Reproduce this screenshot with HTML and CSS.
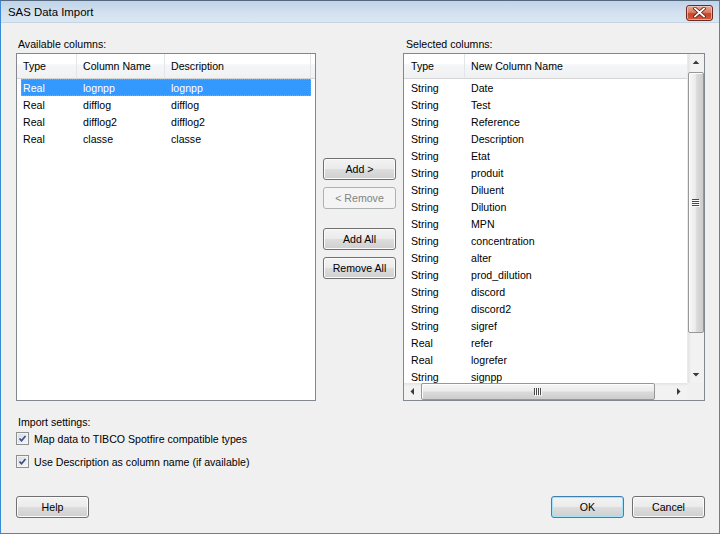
FILE: index.html
```html
<!DOCTYPE html>
<html>
<head>
<meta charset="utf-8">
<title>SAS Data Import</title>
<link rel="stylesheet" href="styles.css">
</head>
<body>
<div class="window">
  <div class="titlebar">
    <span class="title">SAS Data Import</span>
    <div class="close">
      <svg width="13" height="11" viewBox="0 0 13 11"><path d="M2 1.5 L11 9.5 M11 1.5 L2 9.5" stroke="#5a1a12" stroke-width="3.4" stroke-linecap="square" fill="none"/><path d="M2 1.5 L11 9.5 M11 1.5 L2 9.5" stroke="#ffffff" stroke-width="1.8" stroke-linecap="square" fill="none"/></svg>
    </div>
  </div>
  <div class="client">
    <div class="main">
      <div class="col">
        <div class="label">Available columns:</div>
        <div class="listbox">
          <div class="lv-header">
            <div class="hc hc-type">Type</div>
            <div class="hc hc-name">Column Name</div>
            <div class="hc hc-desc">Description</div>
          </div>
          <div class="lrow selected"><span class="c1">Real</span><span class="c2">lognpp</span><span class="c3">lognpp</span></div>
          <div class="lrow"><span class="c1">Real</span><span class="c2">difflog</span><span class="c3">difflog</span></div>
          <div class="lrow"><span class="c1">Real</span><span class="c2">difflog2</span><span class="c3">difflog2</span></div>
          <div class="lrow"><span class="c1">Real</span><span class="c2">classe</span><span class="c3">classe</span></div>
        </div>
      </div>
      <div class="mid">
        <div class="btn">Add &gt;</div>
        <div class="btn disabled gap-s">&lt; Remove</div>
        <div class="btn gap-l">Add All</div>
        <div class="btn gap-s">Remove All</div>
      </div>
      <div class="col">
        <div class="label label-r">Selected columns:</div>
        <div class="listbox grid-lb">
          <div class="rlist">
            <div class="lv-header">
              <div class="hc rh-type">Type</div>
              <div class="hc rh-name">New Column Name</div>
            </div>
            <div class="rrow"><span class="r1">String</span><span class="r2">Date</span></div>
            <div class="rrow"><span class="r1">String</span><span class="r2">Test</span></div>
            <div class="rrow"><span class="r1">String</span><span class="r2">Reference</span></div>
            <div class="rrow"><span class="r1">String</span><span class="r2">Description</span></div>
            <div class="rrow"><span class="r1">String</span><span class="r2">Etat</span></div>
            <div class="rrow"><span class="r1">String</span><span class="r2">produit</span></div>
            <div class="rrow"><span class="r1">String</span><span class="r2">Diluent</span></div>
            <div class="rrow"><span class="r1">String</span><span class="r2">Dilution</span></div>
            <div class="rrow"><span class="r1">String</span><span class="r2">MPN</span></div>
            <div class="rrow"><span class="r1">String</span><span class="r2">concentration</span></div>
            <div class="rrow"><span class="r1">String</span><span class="r2">alter</span></div>
            <div class="rrow"><span class="r1">String</span><span class="r2">prod_dilution</span></div>
            <div class="rrow"><span class="r1">String</span><span class="r2">discord</span></div>
            <div class="rrow"><span class="r1">String</span><span class="r2">discord2</span></div>
            <div class="rrow"><span class="r1">String</span><span class="r2">sigref</span></div>
            <div class="rrow"><span class="r1">Real</span><span class="r2">refer</span></div>
            <div class="rrow"><span class="r1">Real</span><span class="r2">logrefer</span></div>
            <div class="rrow"><span class="r1">String</span><span class="r2">signpp</span></div>
          </div>
          <div class="vscroll">
            <div class="arrow"><svg width="17" height="17" viewBox="0 0 17 17"><path d="M5 10 L8.5 6.5 L12 10 Z" fill="#3a3a3a"/></svg></div>
            <div class="vthumb">
              <svg width="8" height="8" viewBox="0 0 8 8"><path d="M0 0.5h7M0 2.5h7M0 4.5h7M0 6.5h7" stroke="#4a4a4a" stroke-width="1"/><path d="M1 1.5h7M1 3.5h7M1 5.5h7M1 7.5h7" stroke="#fbfbfb" stroke-width="1"/></svg>
            </div>
            <div class="track"></div>
            <div class="arrow"><svg width="17" height="17" viewBox="0 0 17 17"><path d="M5 7 L8.5 10.5 L12 7 Z" fill="#3a3a3a"/></svg></div>
          </div>
          <div class="hscroll">
            <div class="arrow"><svg width="17" height="17" viewBox="0 0 17 17"><path d="M10 5 L6.5 8.5 L10 12 Z" fill="#3a3a3a"/></svg></div>
            <div class="hthumb">
              <svg width="8" height="8" viewBox="0 0 8 8"><path d="M0.5 0v7M2.5 0v7M4.5 0v7M6.5 0v7" stroke="#4a4a4a" stroke-width="1"/><path d="M1.5 1v7M3.5 1v7M5.5 1v7M7.5 1v7" stroke="#fbfbfb" stroke-width="1"/></svg>
            </div>
            <div class="track"></div>
            <div class="arrow"><svg width="17" height="17" viewBox="0 0 17 17"><path d="M7 5 L10.5 8.5 L7 12 Z" fill="#3a3a3a"/></svg></div>
          </div>
          <div class="corner"></div>
        </div>
      </div>
    </div>

    <div class="settings">
      <div class="label">Import settings:</div>
      <div class="cbrow">
        <span class="cb"><svg width="13" height="13" viewBox="0 0 13 13"><path d="M3.5 6.5 L5.5 8.8 L9.5 4" stroke="#3b4f86" stroke-width="1.7" fill="none"/></svg></span>
        <span>Map data to TIBCO Spotfire compatible types</span>
      </div>
      <div class="cbrow cbrow2">
        <span class="cb"><svg width="13" height="13" viewBox="0 0 13 13"><path d="M3.5 6.5 L5.5 8.8 L9.5 4" stroke="#3b4f86" stroke-width="1.7" fill="none"/></svg></span>
        <span>Use Description as column name (if available)</span>
      </div>
    </div>

    <div class="footer">
      <div class="btn">Help</div>
      <div class="spacer"></div>
      <div class="btn default">OK</div>
      <div class="btn">Cancel</div>
    </div>
  </div>
</div>
</body>
</html>
```

FILE: styles.css
```css
* { box-sizing: border-box; }
html, body { margin: 0; padding: 0; }
body {
  width: 720px;
  height: 534px;
  overflow: hidden;
  background: #ffffff;
  font-family: "Liberation Sans", Arial, sans-serif;
  font-size: 10.6px;
  color: #000;
}
.window {
  width: 720px;
  height: 534px;
  display: flex;
  flex-direction: column;
  border: 1px solid #3a8ad6;
  border-top-color: #56687c;
  background: #f0f0f0;
}
.titlebar {
  height: 22px;
  flex: none;
  display: flex;
  align-items: center;
  justify-content: space-between;
  padding: 0 6px 0 7px;
  background: linear-gradient(#c0d3e8, #d3e1f0 55%, #dae6f3);
  border-bottom: 1px solid #c5d3e2;
}
.title {
  font-size: 11.4px;
  color: #000;
  padding-top: 1px;
}
.close {
  width: 27px;
  height: 16px;
  margin-top: 2px;
  border: 1px solid #6f2a1f;
  border-radius: 3px;
  display: flex;
  align-items: center;
  justify-content: center;
  background: linear-gradient(#e8a795 0%, #db7d66 45%, #c7452c 55%, #cf5c3f 100%);
  box-shadow: inset 0 0 0 1px rgba(255, 220, 205, 0.6);
}
.client {
  flex: 1;
  display: flex;
  flex-direction: column;
  padding: 14px 14px 0 15px;
}
.main {
  display: grid;
  grid-template-columns: 300px 73px 302px;
  column-gap: 7px;
}
.label {
  height: 16px;
  line-height: 14px;
  padding-left: 2px;
}
.label-r { padding-left: 3px; }
.listbox {
  height: 348px;
  border: 1px solid #828790;
  background: #fff;
  overflow: hidden;
}
.lv-header {
  display: flex;
  height: 25px;
  border-bottom: 1px solid #d5d5d5;
  background: linear-gradient(#ffffff 0%, #ffffff 40%, #f5f6f7 45%, #f0f1f2 100%);
  white-space: nowrap;
}
.hc {
  flex: none;
  line-height: 25px;
  padding-left: 6px;
  border-right: 1px solid #e2e5ea;
}
.hc-type { width: 60px; }
.hc-name { width: 88px; }
.hc-desc { width: 146px; }
.lrow {
  display: flex;
  height: 17px;
  line-height: 18px;
  margin-left: 4px;
  width: 290px;
  white-space: nowrap;
}
.lrow .c1 { width: 56px; padding-left: 2px; }
.lrow .c2 { width: 88px; padding-left: 6px; }
.lrow .c3 { width: 146px; padding-left: 6px; }
.lrow.selected {
  background: #3399ff;
  color: #fff;
  outline: 1px dotted #e39237;
  outline-offset: -1px;
}
.mid {
  display: flex;
  flex-direction: column;
  padding-top: 121px;
}
.btn {
  width: 73px;
  height: 22px;
  flex: none;
  border: 1px solid #707070;
  border-radius: 3px;
  display: flex;
  align-items: center;
  justify-content: center;
  background: linear-gradient(#f3f3f3 0%, #ebebeb 48%, #dddddd 52%, #cfcfcf 100%);
  box-shadow: inset 0 0 0 1px #fbfbfb;
  white-space: nowrap;
}
.btn.disabled {
  border-color: #adb2b5;
  background: #f4f4f4;
  color: #838383;
  box-shadow: none;
}
.btn.default {
  border-color: #3c7fb1;
  box-shadow: inset 0 0 0 1px #a4e3fa;
}
.gap-s { margin-top: 7px; }
.gap-l { margin-top: 19px; }
.grid-lb {
  display: grid;
  grid-template-columns: 1fr 17px;
  grid-template-rows: 1fr 17px;
}
.rlist {
  overflow: hidden;
  min-width: 0;
  min-height: 0;
}
.rh-type { width: 61px; padding-left: 7px; }
.rh-name { width: 260px; }
.rrow {
  display: flex;
  height: 17px;
  line-height: 18px;
  margin-left: 4px;
  white-space: nowrap;
}
.rrow .r1 { width: 57px; padding-left: 3px; }
.rrow .r2 { padding-left: 6px; }
.vscroll {
  display: flex;
  flex-direction: column;
  background: linear-gradient(90deg, #e3e3e3, #f2f2f2 20%, #f2f2f2);
  border-left: 1px solid #eaeaea;
}
.hscroll {
  display: flex;
  background: linear-gradient(#e3e3e3, #f2f2f2 20%, #f2f2f2);
}
.arrow {
  width: 16px;
  height: 17px;
  flex: none;
  display: flex;
  align-items: center;
  justify-content: center;
}
.hscroll .arrow { width: 17px; height: 17px; }
.arrow svg { display: block; }
.track { flex: 1; }
.vthumb {
  height: 261px;
  margin-top: 1px;
  width: 16px;
  flex: none;
  border: 1px solid #979797;
  border-radius: 2px;
  display: flex;
  align-items: center;
  justify-content: center;
  background: linear-gradient(90deg, #f7f7f7 0%, #ececec 45%, #dadada 55%, #cdcdcd 100%);
  box-shadow: inset 1px 1px 0 #fdfdfd;
}
.hthumb {
  width: 234px;
  height: 17px;
  flex: none;
  border: 1px solid #979797;
  border-radius: 2px;
  display: flex;
  align-items: center;
  justify-content: center;
  background: linear-gradient(#f7f7f7 0%, #ececec 45%, #dadada 55%, #cdcdcd 100%);
  box-shadow: inset 1px 1px 0 #fdfdfd;
}
.corner { background: #f0f0f0; }
.settings {
  margin-top: 14px;
}
.settings .label { height: 15px; padding-left: 2px; }
.cbrow {
  display: flex;
  align-items: center;
  height: 17px;
  gap: 5px;
}
.cbrow2 { margin-top: 6px; }
.cb {
  width: 13px;
  height: 13px;
  flex: none;
  border: 1px solid #8e8f8f;
  background: linear-gradient(135deg, #d6dbe2, #f6f7f9);
  box-shadow: inset 0 0 0 1px #f4f4f4;
  position: relative;
}
.cb svg {
  position: absolute;
  left: -1px;
  top: -1px;
}
.footer {
  display: flex;
  gap: 8px;
  margin-top: 26px;
  padding-right: 0;
}
.spacer { flex: 1; }
```
